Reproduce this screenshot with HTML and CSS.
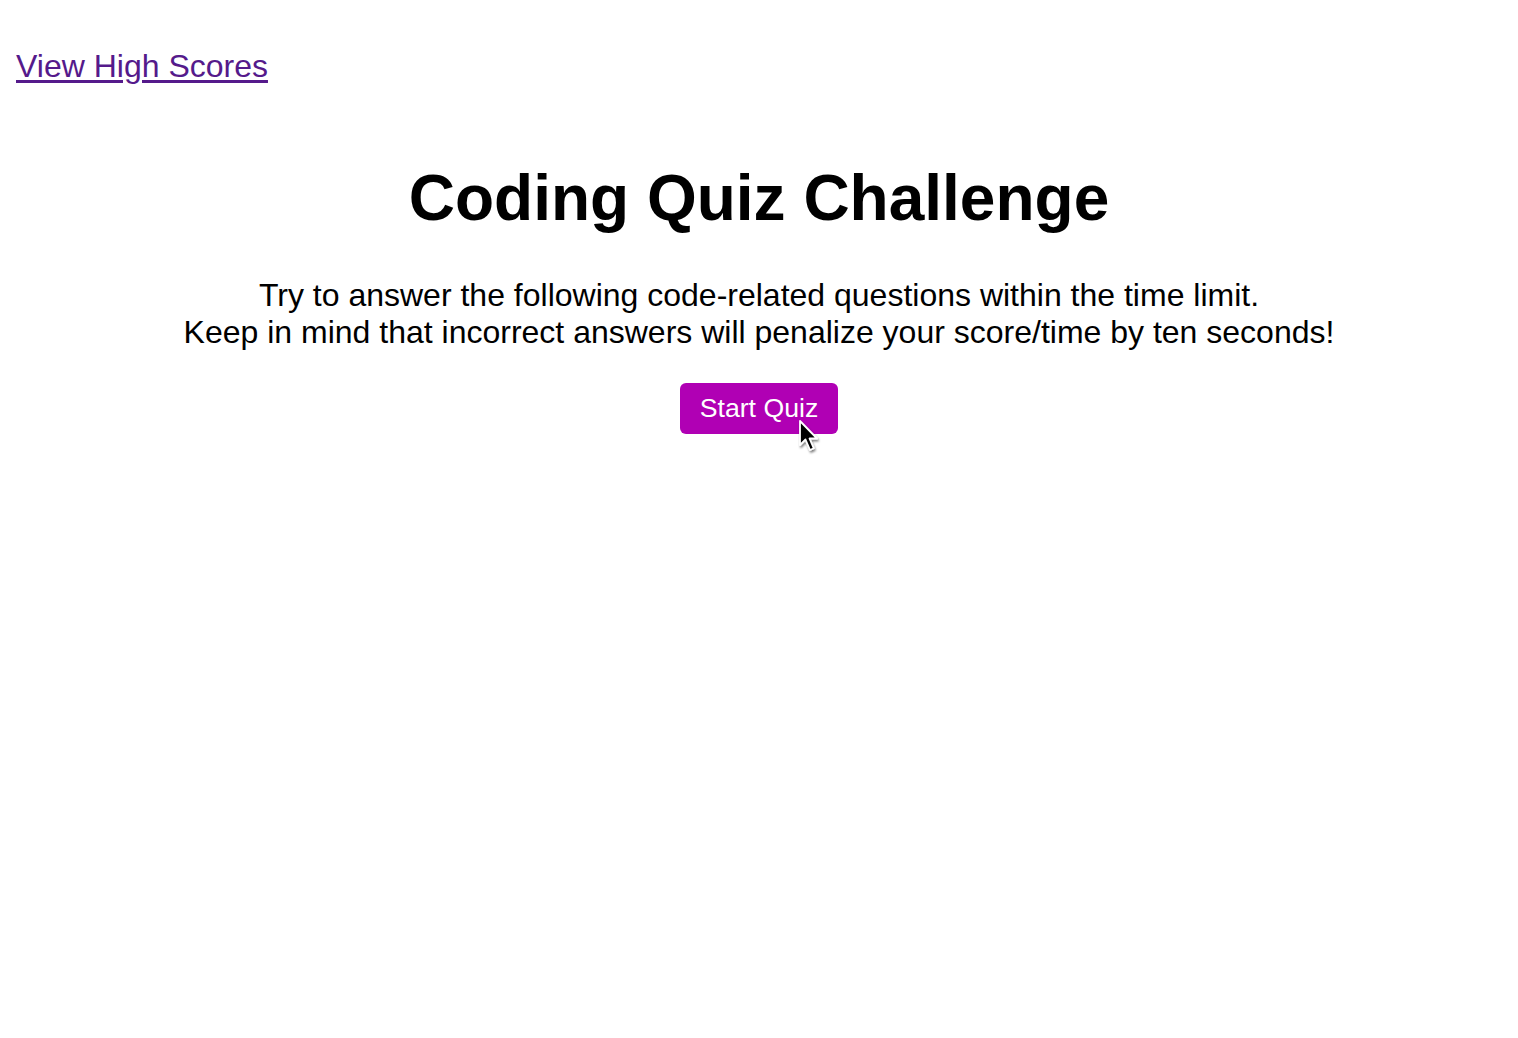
FILE: index.html
```html
<!DOCTYPE html>
<html lang="en">
<head>
<meta charset="utf-8">
<title>Coding Quiz Challenge</title>
<link rel="stylesheet" href="styles.css">
</head>
<body>
<header class="top">
  <a class="scores-link" href="#">View High Scores</a>
</header>
<main class="intro">
  <h1 class="title">Coding Quiz Challenge</h1>
  <p class="lead">Try to answer the following code-related questions within the time limit.<br>Keep in mind that incorrect answers will penalize your score/time by ten seconds!</p>
  <div class="actions">
    <button class="start-btn" type="button">Start Quiz</button>
    <svg class="cursor" width="26" height="40" viewBox="0 0 26 40" aria-hidden="true">
      <defs>
        <filter id="sh" x="-40%" y="-30%" width="180%" height="170%">
          <feDropShadow dx="1" dy="2" stdDeviation="1.2" flood-color="#000" flood-opacity="0.5"/>
        </filter>
      </defs>
      <path d="M2 2 L2 26 L7.5 20.5 L12 31 L15.8 29.3 L11.5 19.5 L19 19.5 Z" fill="#000" stroke="#fff" stroke-width="1.8" stroke-linejoin="round" filter="url(#sh)"/>
    </svg>
  </div>
</main>
</body>
</html>
```
FILE: styles.css
```css
html, body {
  margin: 0;
  padding: 0;
  background: #fff;
}
body {
  font-family: "Liberation Sans", Arial, sans-serif;
  color: #000;
  padding: 48px 16px 0;
  min-height: 100vh;
  box-sizing: border-box;
}
.top {
  line-height: 37px;
  font-size: 32px;
}
.scores-link {
  color: #551a8b;
  text-decoration: underline;
  text-underline-offset: 3px;
  text-decoration-thickness: 3px;
}
.intro {
  text-align: center;
  padding-top: 76px;
}
.title {
  font-size: 64px;
  font-weight: bold;
  line-height: 74px;
  margin: 0 0 42px;
}
.lead {
  font-size: 32px;
  line-height: 36.5px;
  margin: 0 0 32.5px;
}
.actions {
  position: relative;
  display: flex;
  justify-content: center;
  min-height: 80px;
  align-items: flex-start;
}
.start-btn {
  font-family: "Liberation Sans", Arial, sans-serif;
  font-size: 26.67px;
  line-height: 31px;
  color: #fff;
  background: #b000b4;
  border: none;
  border-radius: 6px;
  padding: 10px 19.5px;
  cursor: pointer;
}
.cursor {
  position: absolute;
  display: block;
  left: 782px;
  top: 36px;
}
```
